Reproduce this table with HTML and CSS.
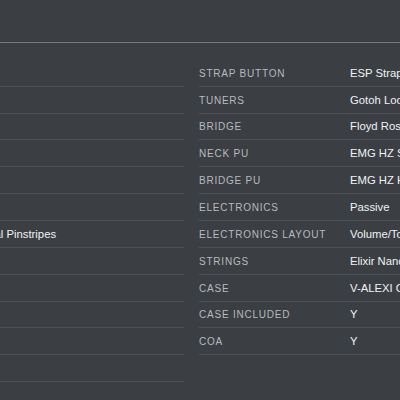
FILE: index.html
```html
<!DOCTYPE html>
<html lang="en">
<head>
<meta charset="utf-8">
<title>Specifications</title>
<link rel="stylesheet" href="styles.css">
</head>
<body>
<header class="top-bar"></header>
<main class="specs">
  <div class="spec-table">
    <div class="row"><span class="label">Construction</span><span class="value">Neck-Thru</span></div>
    <div class="row"><span class="label">Scale</span><span class="value">25.5"</span></div>
    <div class="row"><span class="label">Body</span><span class="value">Alder</span></div>
    <div class="row"><span class="label">Neck</span><span class="value">Maple</span></div>
    <div class="row"><span class="label">Fingerboard</span><span class="value">Ebony</span></div>
    <div class="row"><span class="label">Fingerboard Radius</span><span class="value">350mm</span></div>
    <div class="row"><span class="label">Finish</span><span class="value">Black &amp; Royal Pinstripes</span></div>
    <div class="row"><span class="label">Nut Width</span><span class="value">42mm</span></div>
    <div class="row"><span class="label">Nut Type</span><span class="value">Locking</span></div>
    <div class="row"><span class="label">Inlays</span><span class="value">None</span></div>
    <div class="row"><span class="label">Frets</span><span class="value">24 XJ</span></div>
    <div class="row"><span class="label">Hardware Color</span><span class="value">Black</span></div>
  </div>
  <div class="spec-table">
    <div class="row"><span class="label">Strap Button</span><span class="value">ESP Strap Lock</span></div>
    <div class="row"><span class="label">Tuners</span><span class="value">Gotoh Locking</span></div>
    <div class="row"><span class="label">Bridge</span><span class="value">Floyd Rose Original</span></div>
    <div class="row"><span class="label">Neck PU</span><span class="value">EMG HZ SRO-OC1</span></div>
    <div class="row"><span class="label">Bridge PU</span><span class="value">EMG HZ H4</span></div>
    <div class="row"><span class="label">Electronics</span><span class="value">Passive</span></div>
    <div class="row"><span class="label">Electronics Layout</span><span class="value">Volume/Tone/Toggle</span></div>
    <div class="row"><span class="label">Strings</span><span class="value">Elixir Nanoweb</span></div>
    <div class="row"><span class="label">Case</span><span class="value">V-ALEXI Case</span></div>
    <div class="row"><span class="label">Case Included</span><span class="value">Y</span></div>
    <div class="row"><span class="label">COA</span><span class="value">Y</span></div>
  </div>
</main>
</body>
</html>
```
FILE: styles.css
```css
html, body {
  margin: 0;
  padding: 0;
}
body {
  background: #3b3e43;
  font-family: "Liberation Sans", Arial, Helvetica, sans-serif;
  overflow: hidden;
  width: 400px;
  height: 400px;
}
.top-bar {
  height: 42px;
  border-bottom: 1px solid #76797d;
}
.specs {
  display: grid;
  grid-template-columns: 402px 402px;
  column-gap: 15px;
  align-items: start;
  margin-left: -218px;
  padding-top: 16.8px;
}
.row {
  display: grid;
  grid-template-columns: 151px 1fr;
  align-items: center;
  height: 26.87px;
  box-sizing: border-box;
  border-bottom: 1px solid #4d5055;
  white-space: nowrap;
  overflow: hidden;
}
.label {
  font-size: 10px;
  letter-spacing: 0.78px;
  text-transform: uppercase;
  color: #b8babd;
  padding-top: 1px;
}
.value {
  font-size: 11.3px;
  color: #f0f2f4;
}
```
